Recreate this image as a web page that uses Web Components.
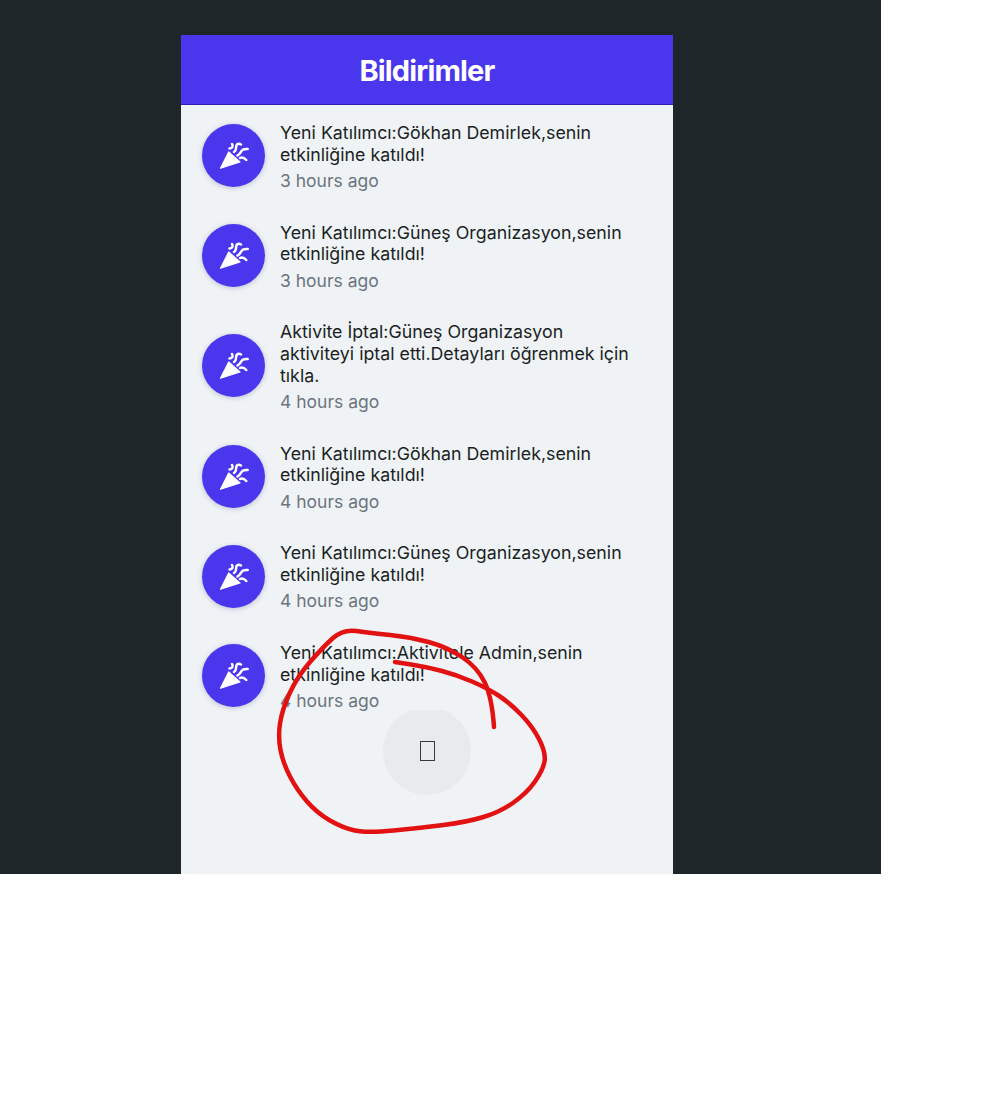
<!DOCTYPE html>
<html lang="tr">
<head>
<meta charset="utf-8">
<title>Bildirimler</title>
<style>
  html, body { margin: 0; padding: 0; background: #fff; }
  body { font-family: Inter, "Noto Sans", sans-serif; position: relative; height: 1113px; overflow: hidden; }
</style>
</head>
<body>
<app-frame>
  <notif-header>Bildirimler</notif-header>
  <notif-item><span>Yeni Katılımcı:Gökhan Demirlek,senin etkinliğine katıldı!</span><span slot="time">3 hours ago</span></notif-item>
  <notif-item><span>Yeni Katılımcı:Güneş Organizasyon,senin etkinliğine katıldı!</span><span slot="time">3 hours ago</span></notif-item>
  <notif-item><span>Aktivite İptal:Güneş Organizasyon aktiviteyi iptal etti.Detayları öğrenmek için tıkla.</span><span slot="time">4 hours ago</span></notif-item>
  <notif-item><span>Yeni Katılımcı:Gökhan Demirlek,senin etkinliğine katıldı!</span><span slot="time">4 hours ago</span></notif-item>
  <notif-item><span>Yeni Katılımcı:Güneş Organizasyon,senin etkinliğine katıldı!</span><span slot="time">4 hours ago</span></notif-item>
  <notif-item><span>Yeni Katılımcı:Aktivitele Admin,senin etkinliğine katıldı!</span><span slot="time">4 hours ago</span></notif-item>
  <load-more></load-more>
</app-frame>
<red-scribble></red-scribble>

<script>
//----------------------------------------------------------------------------
// Dark backdrop with the phone column in it.
//----------------------------------------------------------------------------
class AppFrame extends HTMLElement
{
  connectedCallback() {
    let root = this.attachShadow({mode: 'open'});
    root.innerHTML = `
<style>
  :host {
    display: block;
    box-sizing: border-box;
    width: 881px;
    height: 874px;
    padding: 35px 0 0 181px;
    background: #1e2629;
  }
  .phone {
    width: 492px;
    height: 839px;
    background: #eff3f6;
    overflow: hidden;
  }
</style>
<div class="phone"><slot></slot></div>`;
  }
}

//----------------------------------------------------------------------------
class NotifHeader extends HTMLElement
{
  connectedCallback() {
    let root = this.attachShadow({mode: 'open'});
    root.innerHTML = `
<style>
  :host {
    display: flex;
    align-items: center;
    justify-content: center;
    box-sizing: border-box;
    height: 70px;
    padding-top: 1px;
    background: #4a36ed;
    border-bottom: 1px solid #2a1fb0;
    color: #fff;
    font-size: 29px;
    font-weight: 700;
    letter-spacing: -0.85px;
  }
</style>
<slot></slot>`;
  }
}

//----------------------------------------------------------------------------
// One row: round icon on the left, message and age on the right.
//----------------------------------------------------------------------------
let itemTmpl = document.createElement('template');
itemTmpl.innerHTML = `
<style>
  :host {
    display: flex;
    align-items: center;
    box-sizing: border-box;
    padding: 13px 31px 13px 21px;
    gap: 15px;
    color: #1b1f23;
    font-size: 17.8px;
    line-height: 21.6px;
  }
  .avatar {
    flex: none;
    width: 63px;
    height: 63px;
    margin-top: 2px;
    border-radius: 50%;
    background: #4a36ed;
    box-shadow: 0 1px 5px rgba(40, 30, 120, 0.25);
  }
  .avatar svg { display: block; }
  .text { flex: 1; min-width: 0; padding-top: 4px; }
  .time { margin-top: 4.9px; color: #6c757d; font-size: 17.5px; }
</style>
<div class="avatar">
  <svg width="63" height="63" viewBox="0 0 63 63" fill="none">
    <path d="M18.5 44.3 L26.7 28 L38 38 Z" fill="#fff" stroke="#fff" stroke-width="1.2" stroke-linejoin="round"/>
    <g stroke="#fff" stroke-width="2.5" stroke-linecap="round">
      <path d="M27.5 24.5 C30.5 24 31.5 22 30 20"/>
      <path d="M32 28 C35.5 26 33 22.5 35 20.5 C36 19.7 37.5 19.7 39 20.5"/>
      <path d="M35.5 31.5 C38.5 30.5 38.5 27 41 25.7 C42.5 25 44 24.8 45.7 25"/>
      <path d="M38 34 C40 33 42.5 34 44.3 36"/>
    </g>
  </svg>
</div>
<div class="text">
  <slot></slot>
  <div class="time"><slot name="time"></slot></div>
</div>`;

class NotifItem extends HTMLElement
{
  connectedCallback() {
    let root = this.attachShadow({mode: 'open'});
    root.appendChild(itemTmpl.content.cloneNode(true));
  }
}

//----------------------------------------------------------------------------
// The round load button. Its icon font never loaded, so it shows an empty box.
//----------------------------------------------------------------------------
class LoadMore extends HTMLElement
{
  connectedCallback() {
    let root = this.attachShadow({mode: 'open'});
    root.innerHTML = `
<style>
  :host {
    display: block;
    height: 85px;
    margin-top: -14.8px;
    overflow: hidden;
  }
  .circle {
    display: flex;
    align-items: center;
    justify-content: center;
    width: 88px;
    height: 88px;
    margin: -3px auto 0;
    border-radius: 50%;
    background: #e8ebee;
  }
  .tofu {
    box-sizing: border-box;
    width: 15px;
    height: 20px;
    border: 1px solid #343a40;
  }
</style>
<div class="circle"><div class="tofu"></div></div>`;
  }
}

//----------------------------------------------------------------------------
// Hand drawn red circle lying over the page.
//----------------------------------------------------------------------------
const SCRIBBLE = [[494,727],[492,697],[477,667],[447,647],[410,637],[370,633],[343,629],[323,647],
  [297,677],[282,710],[278,737],[283,763],[297,790],[317,813],[343,828],[367,833],[420,828],
  [467,822],[500,812],[527,793],[543,770],[546,753],[533,727],[510,703],[487,688],[457,675],
  [427,667],[395,662]];

class RedScribble extends HTMLElement
{
  connectedCallback() {
    let root = this.attachShadow({mode: 'open'});
    let d = 'M' + SCRIBBLE[0].join(' ');
    for (let i = 1; i < SCRIBBLE.length - 1; i++) {
      let p = SCRIBBLE[i], n = SCRIBBLE[i + 1];
      d += ` Q${p[0]} ${p[1]} ${(p[0] + n[0]) / 2} ${(p[1] + n[1]) / 2}`;
    }
    d += ' L' + SCRIBBLE[SCRIBBLE.length - 1].join(' ');
    root.innerHTML = `
<style>
  :host { position: absolute; left: 0; top: 0; width: 1000px; height: 1113px; pointer-events: none; }
  svg { display: block; }
</style>
<svg width="1000" height="1113" fill="none">
  <path d="${d}" stroke="#e31212" stroke-width="4.5" stroke-linecap="round" stroke-linejoin="round"/>
</svg>`;
  }
}

customElements.define('app-frame', AppFrame);
customElements.define('notif-header', NotifHeader);
customElements.define('notif-item', NotifItem);
customElements.define('load-more', LoadMore);
customElements.define('red-scribble', RedScribble);
</script>
</body>
</html>
